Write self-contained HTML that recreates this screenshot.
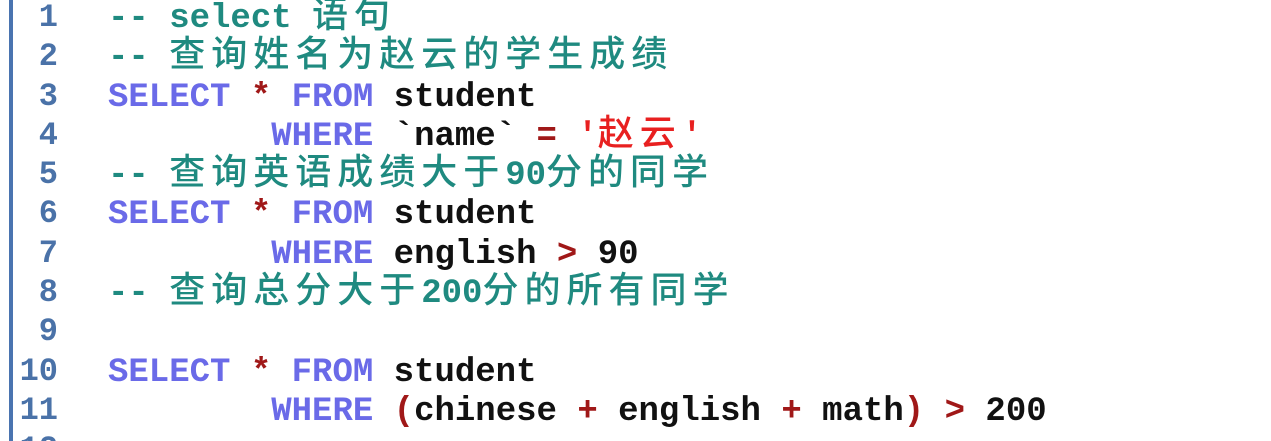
<!DOCTYPE html>
<html><head><meta charset="utf-8"><style>
html,body{margin:0;padding:0;background:#fff;width:1271px;height:441px;overflow:hidden;position:relative;}
.bar{position:absolute;left:9px;top:0;width:4px;height:441px;background:#4a74b0;}
.ln{position:absolute;left:0;width:58px;height:39px;line-height:39px;text-align:right;font:bold 32px/39px "Liberation Mono",monospace;color:#4a72a8;}
.code{position:absolute;left:108px;height:39px;white-space:pre;font:bold 34px/39px "Liberation Mono","Noto Sans CJK SC",monospace;color:#111;}
.c{color:#1f8a80;}
.k{color:#6a6ae8;}
.o{color:#a01818;}
.s{color:#e82020;}
.z{font-family:"Noto Sans CJK SC",sans-serif;font-weight:500;font-size:36px;line-height:10px;letter-spacing:6px;}
</style></head><body>
<div class="bar"></div>
<div class="ln" style="top:-2px">1</div>
<div class="ln" style="top:37px">2</div>
<div class="ln" style="top:77px">3</div>
<div class="ln" style="top:116px">4</div>
<div class="ln" style="top:155px">5</div>
<div class="ln" style="top:194px">6</div>
<div class="ln" style="top:234px">7</div>
<div class="ln" style="top:273px">8</div>
<div class="ln" style="top:312px">9</div>
<div class="ln" style="top:352px">10</div>
<div class="ln" style="top:391px">11</div>
<div class="ln" style="top:430px;height:11px;overflow:hidden">12</div>

<div class="code c" style="top:0px">-- select <span class="z">语句</span></div>
<div class="code c" style="top:39px">-- <span class="z">查询姓名为赵云的学生成绩</span></div>
<div class="code" style="top:79px"><span class="k">SELECT</span> <span class="o">*</span> <span class="k">FROM</span> student</div>
<div class="code" style="top:118px">        <span class="k">WHERE</span> `name` <span class="o">=</span> <span class="s">'<span class="z">赵云</span>'</span></div>
<div class="code c" style="top:157px">-- <span class="z">查询英语成绩大于</span>90<span class="z">分的同学</span></div>
<div class="code" style="top:196px"><span class="k">SELECT</span> <span class="o">*</span> <span class="k">FROM</span> student</div>
<div class="code" style="top:236px">        <span class="k">WHERE</span> english <span class="o">&gt;</span> 90</div>
<div class="code c" style="top:275px">-- <span class="z">查询总分大于</span>200<span class="z">分的所有同学</span></div>
<div class="code" style="top:354px"><span class="k">SELECT</span> <span class="o">*</span> <span class="k">FROM</span> student</div>
<div class="code" style="top:393px">        <span class="k">WHERE</span> <span class="o">(</span>chinese <span class="o">+</span> english <span class="o">+</span> math<span class="o">)</span> <span class="o">&gt;</span> 200</div>
</body></html>
